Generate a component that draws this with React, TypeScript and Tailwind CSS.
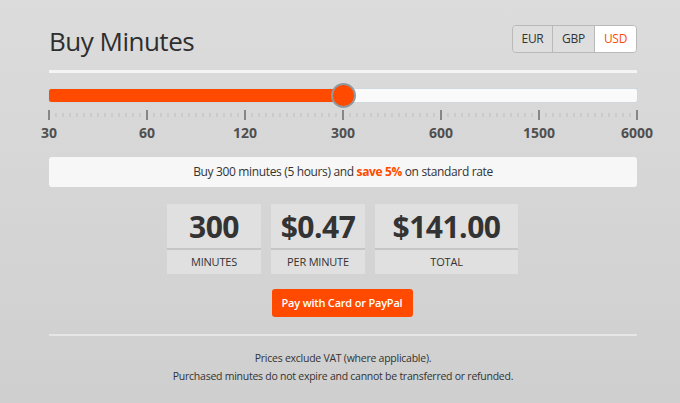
import React from "react";

const stops = ["30", "60", "120", "300", "600", "1500", "6000"];

function Ticks() {
  const width = 588;
  const seg = width / 6;
  const minor: number[] = [];
  for (let s = 0; s < 6; s++) {
    for (let i = 1; i < 14; i++) minor.push(s * seg + (i * seg) / 14);
  }
  return (
    <svg width={width + 2} height={10} className="block -ml-px">
      {minor.map((x, i) => (
        <line key={i} x1={x + 1} x2={x + 1} y1={3} y2={7} stroke="#bdbdbd" strokeWidth={1} />
      ))}
      {stops.map((_, i) => (
        <line key={"m" + i} x1={i * seg + 1} x2={i * seg + 1} y1={0} y2={10} stroke="#6b6b6b" strokeWidth={1.5} />
      ))}
    </svg>
  );
}

export default function App() {
  return (
    <div
      className="w-[680px] h-[403px] bg-gradient-to-b from-[#dcdcdc] to-[#cfcfcf] text-[#333]"
      style={{ fontFamily: '"Open Sans", sans-serif' }}
    >
      <div className="w-[588px] ml-[49px] pt-[24px]">
        {/* Header */}
        <div className="flex items-center justify-between h-[30px]">
          <h1 className="text-[26px] leading-none tracking-[-0.5px] text-[#2e2e2e] mt-[3px]">Buy Minutes</h1>
          <div className="flex h-[28px] rounded-[4px] border border-[#b9b9b9] overflow-hidden text-[12px] tracking-[-0.3px]">
            <button className="w-[40px] bg-[#dedede] border-r border-[#b9b9b9] text-[#333]">EUR</button>
            <button className="w-[42px] bg-[#dedede] border-r border-[#b9b9b9] text-[#333]">GBP</button>
            <button className="w-[41px] bg-white text-[#ff4a00]">USD</button>
          </div>
        </div>

        <div className="h-[3px] bg-[#f4f4f4] mt-[16px]" />

        {/* Slider */}
        <div className="relative mt-[16px] h-[13px] rounded-[2px] bg-[#fafafa] shadow-[0_0_0_1px_#cfd8dc]">
          <div className="absolute left-0 top-0 h-full w-[294px] rounded-l-[2px] bg-[#ff4a00]" />
          <div className="absolute left-[282px] top-[-6px] w-[25px] h-[25px] rounded-full bg-[#ff4a00] border-2 border-[#8f9aa0]" />
        </div>
        <div className="mt-[8px]">
          <Ticks />
        </div>
        <div className="relative h-[22px] mt-[2px]">
          {stops.map((s, i) => (
            <span
              key={s}
              className="absolute top-0 -translate-x-1/2 text-[14px] font-bold text-[#505050]"
              style={{ left: i * 98 }}
            >
              {s}
            </span>
          ))}
        </div>

        {/* Info */}
        <div className="mt-[13px] h-[30px] rounded-[3px] bg-[#f7f7f7] flex items-center justify-center text-[12px] tracking-[-0.35px] text-[#333]">
          Buy 300 minutes (5 hours) and&nbsp;<span className="font-bold text-[#ff4a00]">save 5%</span>&nbsp;on standard rate
        </div>

        {/* Stats */}
        <div className="mt-[17px] flex justify-center gap-[10px] -ml-[1px]">
          {[
            { v: "300", l: "MINUTES", w: "w-[94px]" },
            { v: "$0.47", l: "PER MINUTE", w: "w-[94px]" },
            { v: "$141.00", l: "TOTAL", w: "w-[143px]" },
          ].map((s) => (
            <div key={s.l} className={`${s.w} bg-[#e0e0e0]`}>
              <div className="h-[46px] flex items-center justify-center text-[30px] font-bold text-[#333] tracking-[-0.5px] border-b-2 border-[#c6c6c6]">
                {s.v}
              </div>
              <div className="h-[24px] flex items-center justify-center text-[11px] tracking-[-0.2px] text-[#333]">{s.l}</div>
            </div>
          ))}
        </div>

        {/* Button */}
        <div className="flex justify-center mt-[15px]">
          <button className="ml-[-2px] w-[141px] h-[28px] rounded-[3px] bg-[#ff4a00] text-white text-[11px] tracking-[-0.2px] font-semibold">
            Pay with Card or PayPal
          </button>
        </div>

        <div className="h-[2px] bg-[#e6e6e6] mt-[17px]" />

        <div className="mt-[13px] text-center text-[10.5px] tracking-[-0.25px] leading-[18px] text-[#333]">
          <p>Prices exclude VAT (where applicable).</p>
          <p>Purchased minutes do not expire and cannot be transferred or refunded.</p>
        </div>
      </div>
    </div>
  );
}
